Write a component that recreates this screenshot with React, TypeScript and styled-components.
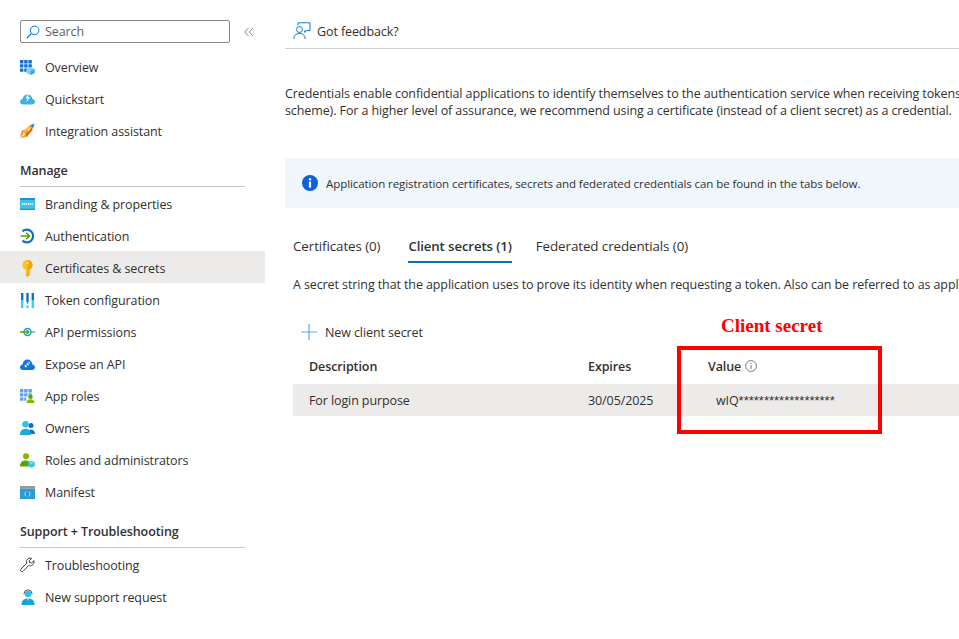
import styled, { createGlobalStyle } from "styled-components";
import { ReactNode } from "react";

const GlobalStyle = createGlobalStyle`
  html, body {
    margin: 0;
    padding: 0;
    background: #fff;
    overflow: hidden;
  }
  * {
    box-sizing: border-box;
  }
`;

const Page = styled.div`
  position: relative;
  display: flex;
  width: 959px;
  height: 639px;
  overflow: hidden;
  font-family: "Open Sans", "Noto Sans", Arial, sans-serif;
  font-size: 12.5px;
  letter-spacing: -0.1px;
  line-height: 17px;
  color: #323130;
`;

const Sidebar = styled.aside`
  flex: 0 0 265px;
  display: flex;
  flex-direction: column;
  padding-top: 20px;
`;

const SearchRow = styled.div`
  display: flex;
  align-items: center;
  height: 30px;
  padding: 0 0 7px 20px;
`;

const SearchBox = styled.div`
  display: flex;
  align-items: center;
  gap: 5px;
  width: 210px;
  height: 23px;
  padding-left: 5px;
  border: 1px solid #8a8886;
  border-radius: 2px;
  color: #605e5c;
`;

const Collapse = styled.span`
  display: flex;
  margin-left: 14px;
`;

const NavItem = styled.div<{ $active?: boolean }>`
  display: flex;
  align-items: center;
  gap: 10px;
  height: 32px;
  padding: 2px 0 0 20px;
  white-space: nowrap;
  background: ${(p) => (p.$active ? "#edebe9" : "transparent")};
`;

const IconSlot = styled.span`
  flex: 0 0 15px;
  display: flex;
  align-items: center;
  justify-content: center;
  width: 15px;
  height: 16px;
`;

const SectionTitle = styled.div`
  margin: 9px 20px 0;
  height: 32px;
  padding-top: 7px;
  border-bottom: 1px solid #c8c6c4;
  font-weight: 600;
`;

const Main = styled.main`
  flex: 1;
  min-width: 0;
  padding-left: 20px;
  white-space: nowrap;
`;

const Toolbar = styled.div`
  display: flex;
  align-items: center;
  gap: 6px;
  height: 49px;
  padding: 14px 0 0 8px;
  border-bottom: 1px solid #d2d0ce;
`;

const Intro = styled.p`
  margin: 36px 0 0;
`;

const Banner = styled.div`
  display: flex;
  align-items: center;
  gap: 8px;
  height: 50px;
  margin-top: 39px;
  padding-left: 17px;
  background: #eff6fc;
  font-size: 11.55px;
`;

const Tabs = styled.div`
  display: flex;
  gap: 24px;
  margin: 22px 0 0 8px;
`;

const Tab = styled.div<{ $active?: boolean }>`
  height: 33px;
  margin-left: ${(p) => (p.$active ? "4px" : "0")};
  padding-top: 8px;
  border-bottom: 2px solid ${(p) => (p.$active ? "#0f6cbd" : "transparent")};
  font-size: ${(p) => (p.$active ? "13.2px" : "13.4px")};
  font-weight: ${(p) => (p.$active ? 600 : 400)};
`;

const TabNote = styled.p`
  margin: 13px 0 0 8px;
`;

const AddButton = styled.div`
  display: flex;
  align-items: center;
  gap: 8px;
  height: 32px;
  margin: 23px 0 0 16px;
`;

const TableRow = styled.div<{ $head?: boolean }>`
  display: grid;
  grid-template-columns: 279px 120px 1fr;
  align-items: center;
  height: ${(p) => (p.$head ? "36px" : "32px")};
  margin-left: 8px;
  padding-left: 16px;
  background: ${(p) => (p.$head ? "transparent" : "#edebe9")};
  font-weight: ${(p) => (p.$head ? 600 : 400)};
`;

const ValueHead = styled.span`
  display: flex;
  align-items: center;
  gap: 4px;
`;

const SecretValue = styled.span`
  padding-left: 8px;
`;

const Masked = styled.span`
  font-family: "Liberation Sans", Arial, sans-serif;
  font-size: 13px;
  letter-spacing: 0;
`;

const RedBox = styled.div`
  position: absolute;
  left: 677px;
  top: 346px;
  width: 205px;
  height: 88px;
  border: 4px solid #ff0000;
`;

const RedLabel = styled.div`
  position: absolute;
  left: 721px;
  top: 316px;
  font-family: "Liberation Serif", "Times New Roman", serif;
  font-size: 19px;
  font-weight: 700;
  letter-spacing: 0;
  line-height: 20px;
  color: #ff0000;
`;

const SearchIcon = () => (
  <svg width="14" height="14" viewBox="0 0 14 14" fill="none">
    <circle cx="8.6" cy="5.4" r="4.3" stroke="#0078d4" strokeWidth="1" />
    <path d="M5.4 8.6 1 13" stroke="#0078d4" strokeWidth="1.2" />
  </svg>
);

const ChevronsIcon = () => (
  <svg width="10" height="10" viewBox="0 0 10 10" fill="none" stroke="#8a8886" strokeWidth="1">
    <path d="M4.5 1 .8 5l3.7 4M9 1 5.3 5 9 9" />
  </svg>
);

const OverviewIcon = () => (
  <svg width="15" height="15" viewBox="0 0 15 15">
    <path fill="#0f6fd0" d="M0 0h3.4v3.4H0zM4.2 0h3.4v3.4H4.2zM8.4 0h3.4v3.4H8.4zM0 4.2h3.4v3.4H0zM4.2 4.2h3.4v3.4H4.2zM8.4 4.2h3.4v3.4H8.4zM0 8.4h3.4v3.4H0zM4.2 8.4h3.4v3.4H4.2z" />
    <path fill="#7fd3f2" d="m10.5 6.800 4.200 2.200v4l-4.200 2-4.200-2V9z" />
    <path fill="#3fa9e0" d="m10.500 11 4.200-2v4l-4.200 2z" />
  </svg>
);

const QuickstartIcon = () => (
  <svg width="15" height="12" viewBox="0 0 15 12">
    <path fill="#3fb1e3" d="M3.200 11.500C1.300 11.500 0 10.200 0 8.700c0-1.500 1.100-2.600 2.600-2.800C3 3.200 5 1.500 7.500 1.500s4.500 1.700 4.900 4.400c1.500.2 2.600 1.300 2.600 2.800s-1.300 2.800-3.200 2.800z" />
    <path fill="#fff" d="M8.500 0 5.500 5.500h2L6.200 9.500 10.200 4H8z" />
  </svg>
);

const RocketIcon = () => (
  <svg width="16" height="16" viewBox="0 0 16 16">
    <path fill="#f7941d" d="M0 15 2 7.500l4-1L4 9l-1 3zM0 15.500 8 14l1.500-4-3 1.500L3.500 13z" />
    <path fill="#fcb034" d="M3 9 10 2l3 2-7 8z" />
    <path fill="#f25c19" d="M5.500 11.500 13 4l.5 3-6 6.500z" />
    <path fill="#2a7fd4" d="M10.500 2 15.500 0 14 5z" />
    <circle cx="9.500" cy="6.500" r="1.200" fill="#fff2c9" />
  </svg>
);

const BrandingIcon = () => (
  <svg width="15" height="12" viewBox="0 0 15 12">
    <rect width="15" height="12" fill="#3dc2ee" />
    <rect width="15" height="2" fill="#1f8fd6" />
    <rect y="10.800" width="15" height="1.200" fill="#1f8fd6" />
    <path stroke="#fff" strokeWidth="1.500" strokeDasharray="1.400 .6" d="M2 6h11" />
  </svg>
);

const AuthIcon = () => (
  <svg width="15" height="16" viewBox="0 0 15 16" fill="none">
    <path stroke="#0f6fd0" strokeWidth="2.200" d="M2.500 3.400A6.300 6.300 0 1 1 2.500 12.600" />
    <path stroke="#57a300" strokeWidth="1.500" d="M.5 8h8.500M6.200 4.800 9.500 8l-3.300 3.200" />
  </svg>
);

const KeyIcon = () => (
  <svg width="11" height="17" viewBox="0 0 11 17">
    <path fill="#fcc31e" d="M5.500 0a5 5 0 0 1 2 9.600V15l-2 2-2-1.500v-1.200l1-.8-1-.8v-1l1-.7-1-.7V9.600a5 5 0 0 1 2-9.600z" />
    <path fill="#f3a60d" d="M5.500 0a5 5 0 0 1 2 9.600V15l-2 2z" />
    <circle cx="5.500" cy="3" r="1" fill="#fff0b0" />
  </svg>
);

const TokenIcon = () => (
  <svg width="13" height="15" viewBox="0 0 13 15">
    <path fill="#0f6fd0" d="M0 0h2.400v7H0zM10.600 0H13v7h-2.400z" />
    <path fill="#32d4f5" d="M0 7h2.400v8H0zM10.600 7H13v8h-2.400z" />
    <path fill="#0f6fd0" d="M5.300 0h2.400v9H5.300z" />
    <path fill="#7f8ea3" d="M5.800 9h1.400v2H5.800z" />
    <path fill="#32d4f5" d="M5.300 12.500h2.400V15H5.300z" />
  </svg>
);

const ApiIcon = () => (
  <svg width="15" height="10" viewBox="0 0 15 10" fill="none">
    <path stroke="#1a9ed8" strokeWidth="1.100" d="M11 5h4" />
    <circle cx="7.500" cy="5" r="3.500" stroke="#1a9ed8" strokeWidth="1.500" />
    <path stroke="#57a300" strokeWidth="1.500" d="M0 5h8.500M6.500 3l2.200 2-2.200 2" />
  </svg>
);

const ExposeIcon = () => (
  <svg width="15" height="11" viewBox="0 0 15 11">
    <path fill="#0f78d8" d="M3.200 11C1.300 11 0 9.700 0 8.200c0-1.500 1.100-2.600 2.600-2.800C3 2.400 5 .5 7.500.5s4.500 1.900 4.900 4.900c1.500.2 2.600 1.300 2.600 2.800S13.700 11 11.800 11z" />
    <path stroke="#cfe6fa" strokeWidth="2.400" strokeDasharray="2 .8" d="m5 7.800 4.800-4.600" />
  </svg>
);

const AppRolesIcon = () => (
  <svg width="15" height="14" viewBox="0 0 15 14">
    <path fill="#5ea0ef" d="M0 0h3.400v3.400H0zM4.200 0h3.400v3.400H4.200zM8.400 0h3.400v3.400H8.400zM0 4.200h3.400v3.400H0zM4.200 4.200h3.400v3.400H4.200zM8.400 4.200h3.400v1.500H8.400zM0 8.400h3.400v3.400H0zM4.200 8.400h2v3.400h-2z" />
    <circle cx="10.500" cy="7.800" r="2.200" fill="#57a300" />
    <path fill="#7fba00" d="M6.500 14c0-2.500 1.500-3.800 4-3.800s4 1.300 4 3.800z" />
  </svg>
);

const OwnersIcon = () => (
  <svg width="15" height="14" viewBox="0 0 15 14">
    <circle cx="11" cy="4.500" r="2.500" fill="#0f6fd0" />
    <path fill="#0f6fd0" d="M8 13c0-3 1-4.500 3-4.500s4 1.500 4 4.500z" />
    <circle cx="5.500" cy="3.200" r="3.200" fill="#32bfe8" />
    <path fill="#1fa8d8" d="M0 14c0-4 2-6.200 5.500-6.200S11 10 11 14z" />
  </svg>
);

const AdminIcon = () => (
  <svg width="15" height="15" viewBox="0 0 15 15">
    <circle cx="6" cy="3.200" r="3" fill="#7fba00" />
    <path fill="#57a300" d="M0 13.500c0-4 2-6 5.500-6s5.500 2 5.500 6z" />
    <path fill="#3dc2ee" d="m11.500 7.800 3.300 1.800v3.300L11.500 14.800l-3.300-1.900V9.600z" />
    <path fill="#a8e4f7" d="m11.500 9 1.600 1-1.600 1-1.600-1z" />
  </svg>
);

const ManifestIcon = () => (
  <svg width="15" height="13" viewBox="0 0 15 13">
    <rect width="15" height="2.800" fill="#9a9a9a" />
    <rect y="2.800" width="15" height="10.200" fill="#2a9bd8" />
    <path stroke="#d8f0fb" strokeWidth=".8" fill="none" d="M6 5.500 4.800 8 6 10.500M9 5.500 10.200 8 9 10.500" />
  </svg>
);

const WrenchIcon = () => (
  <svg width="16" height="16" viewBox="0 0 16 16" fill="none" stroke="#323130" strokeWidth="1">
    <path d="M15 3.300 12.400 5.800 10.200 5.500 9.900 3.400 12.500.9C10.500.2 8 1 7.100 3c-.5 1.100-.4 2.200 0 3.200L1 12.400c-.7.700-.7 1.700 0 2.300.6.600 1.600.6 2.200 0l6.100-6.100c1.200.4 2.500.3 3.600-.4 1.600-1 2.300-3 2.100-4.900z" />
  </svg>
);

const SupportIcon = () => (
  <svg width="14" height="16" viewBox="0 0 14 16">
    <path fill="none" stroke="#505a64" strokeWidth="1" d="M3 5.500V4.800a4 4 0 0 1 8 0v.7" />
    <circle cx="7" cy="5" r="3.200" fill="#32bfe8" />
    <path fill="#12a5d8" d="M.5 16c0-4.500 2.200-6.500 6.500-6.500s6.500 2 6.500 6.500z" />
    <path fill="#fff" d="M6.300 9.500h1.400L7 12z" />
  </svg>
);

const FeedbackIcon = () => (
  <svg width="18" height="18" viewBox="0 0 18 18" fill="none" stroke="#0f78d8" strokeWidth="1">
    <path d="M5 3.500V.8h12v7.800h-3.300l-2 1.800V8.300" />
    <circle cx="6.500" cy="7.500" r="3" />
    <path d="M.8 17c0-3.500 2.300-5.600 5.700-5.600s5.700 2.100 5.700 5.600" />
  </svg>
);

const InfoIcon = () => (
  <svg width="16" height="16" viewBox="0 0 16 16">
    <circle cx="8" cy="8" r="8" fill="#0f5fdc" />
    <circle cx="8" cy="4.300" r="1.200" fill="#fff" />
    <path fill="#fff" d="M6.900 6.600h2.200v6H6.900z" />
  </svg>
);

const SmallInfoIcon = () => (
  <svg width="12" height="12" viewBox="0 0 12 12" fill="none">
    <circle cx="6" cy="6" r="5.400" stroke="#605e5c" strokeWidth=".8" />
    <path stroke="#605e5c" strokeWidth=".9" d="M6 5.200V9M6 3v1" />
  </svg>
);

const PlusIcon = () => (
  <svg width="16" height="16" viewBox="0 0 16 16" stroke="#5ea8e6" strokeWidth="1.200">
    <path d="M8 0v16M0 8h16" />
  </svg>
);

type NavEntry = { label: string; icon: ReactNode; active?: boolean };

const topItems: NavEntry[] = [
  { label: "Overview", icon: <OverviewIcon /> },
  { label: "Quickstart", icon: <QuickstartIcon /> },
  { label: "Integration assistant", icon: <RocketIcon /> },
];

const manageItems: NavEntry[] = [
  { label: "Branding & properties", icon: <BrandingIcon /> },
  { label: "Authentication", icon: <AuthIcon /> },
  { label: "Certificates & secrets", icon: <KeyIcon />, active: true },
  { label: "Token configuration", icon: <TokenIcon /> },
  { label: "API permissions", icon: <ApiIcon /> },
  { label: "Expose an API", icon: <ExposeIcon /> },
  { label: "App roles", icon: <AppRolesIcon /> },
  { label: "Owners", icon: <OwnersIcon /> },
  { label: "Roles and administrators", icon: <AdminIcon /> },
  { label: "Manifest", icon: <ManifestIcon /> },
];

const supportItems: NavEntry[] = [
  { label: "Troubleshooting", icon: <WrenchIcon /> },
  { label: "New support request", icon: <SupportIcon /> },
];

const renderItems = (items: NavEntry[]) =>
  items.map((item) => (
    <NavItem key={item.label} $active={item.active}>
      <IconSlot>{item.icon}</IconSlot>
      {item.label}
    </NavItem>
  ));

export default function App() {
  return (
    <Page>
      <GlobalStyle />
      <Sidebar>
        <SearchRow>
          <SearchBox>
            <SearchIcon />
            Search
          </SearchBox>
          <Collapse>
            <ChevronsIcon />
          </Collapse>
        </SearchRow>
        {renderItems(topItems)}
        <SectionTitle>Manage</SectionTitle>
        {renderItems(manageItems)}
        <SectionTitle>Support + Troubleshooting</SectionTitle>
        {renderItems(supportItems)}
      </Sidebar>
      <Main>
        <Toolbar>
          <FeedbackIcon />
          Got feedback?
        </Toolbar>
        <Intro>
          Credentials enable confidential applications to identify themselves to the authentication service when receiving tokens at a web addressable location (using an HTTPS
          <br />
          scheme). For a higher level of assurance, we recommend using a certificate (instead of a client secret) as a credential.
        </Intro>
        <Banner>
          <InfoIcon />
          Application registration certificates, secrets and federated credentials can be found in the tabs below.
        </Banner>
        <Tabs>
          <Tab>Certificates (0)</Tab>
          <Tab $active>Client secrets (1)</Tab>
          <Tab>Federated credentials (0)</Tab>
        </Tabs>
        <TabNote>
          A secret string that the application uses to prove its identity when requesting a token. Also can be referred to as application password.
        </TabNote>
        <AddButton>
          <PlusIcon />
          New client secret
        </AddButton>
        <TableRow $head>
          <span>Description</span>
          <span>Expires</span>
          <ValueHead>
            Value
            <SmallInfoIcon />
          </ValueHead>
        </TableRow>
        <TableRow>
          <span>For login purpose</span>
          <span>30/05/2025</span>
          <SecretValue>
            wIQ<Masked>*******************</Masked>
          </SecretValue>
        </TableRow>
      </Main>
      <RedLabel>Client secret</RedLabel>
      <RedBox />
    </Page>
  );
}
